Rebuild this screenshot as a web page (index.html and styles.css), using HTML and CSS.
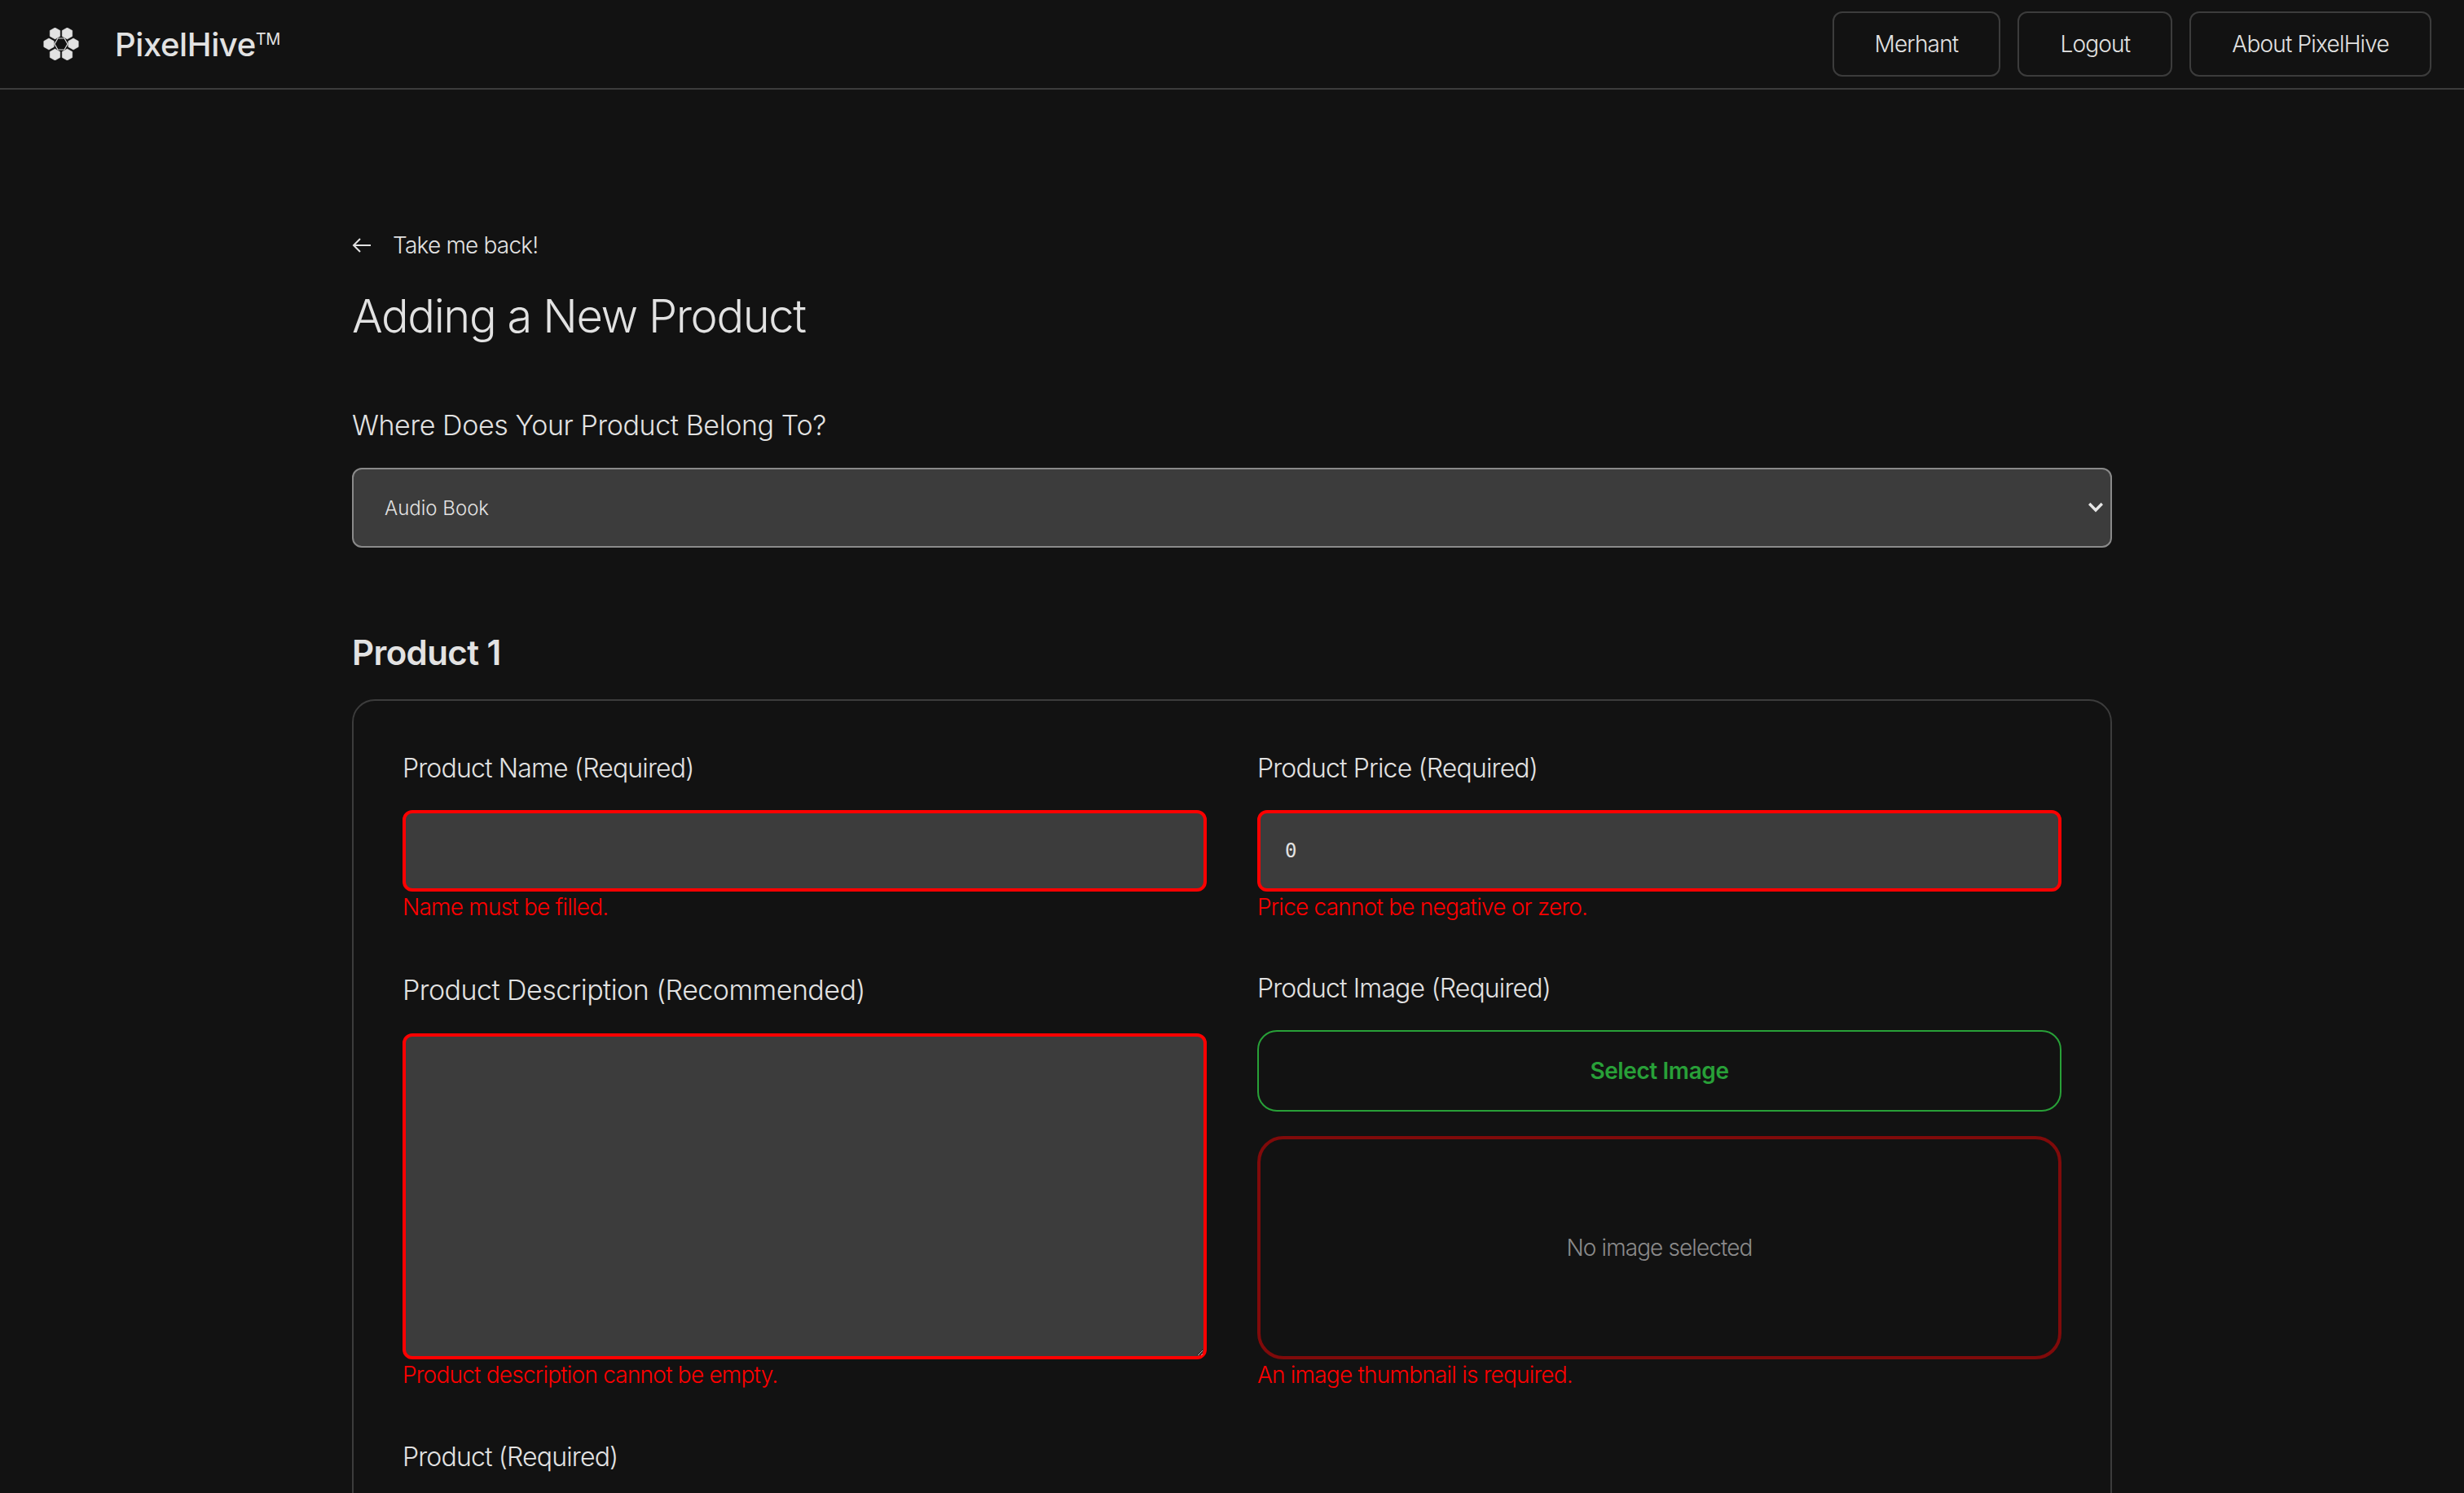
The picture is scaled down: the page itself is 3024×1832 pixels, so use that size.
FILE: index.html
```html
<!DOCTYPE html>
<html lang="en">
<head>
  <meta charset="UTF-8">
  <title>PixelHive - Add Product</title>
  <link rel="stylesheet" href="styles.css">
</head>
<body>

  <header class="topbar">
    <a class="brand" href="#">
      <svg class="brand-logo" viewBox="0 0 44 40" width="44" height="40">
        <defs>
          <polygon id="cell" points="0,-7 6.2,-3.5 6.2,3.5 0,7 -6.2,3.5 -6.2,-3.5"/>
        </defs>
        <g fill="#e2e2e2" stroke="#e2e2e2" stroke-width="0.6" stroke-linejoin="round">
          <use href="#cell" x="14.5" y="7"/>
          <use href="#cell" x="29.5" y="7"/>
          <use href="#cell" x="7" y="20"/>
          <use href="#cell" x="37" y="20"/>
          <use href="#cell" x="14.5" y="33"/>
          <use href="#cell" x="29.5" y="33"/>
        </g>
        <polygon points="14,20 18,13 26,13 30,20 26,27 18,27" fill="none" stroke="#e2e2e2" stroke-width="1.2"/>
      </svg>
      <span class="brand-name">PixelHive<sup class="brand-tm">TM</sup></span>
    </a>
    <nav class="topnav">
      <a class="navbtn" href="#">Merhant</a>
      <a class="navbtn" href="#">Logout</a>
      <a class="navbtn" href="#">About PixelHive</a>
    </nav>
  </header>

  <main class="page">
    <a class="backlink" href="#">
      <svg viewBox="0 0 24 20" width="24" height="20" fill="none" stroke="#e2e2e2" stroke-width="2">
        <path d="M23 10H2M10 2l-8 8 8 8"/>
      </svg>
      Take me back!
    </a>
    <h1 class="title">Adding a New Product</h1>

    <label class="category-label" for="category">Where Does Your Product Belong To?</label>
    <div class="select-wrap">
      <select class="category" id="category">
        <option>Audio Book</option>
      </select>
      <svg class="chevron" viewBox="0 0 18 13" width="18" height="13" fill="none" stroke="#e6e6e6" stroke-width="3.4">
        <path d="M1.2 2l7.8 8 7.8-8"/>
      </svg>
    </div>

    <h2 class="product-title">Product 1</h2>

    <section class="panel">
      <div class="row">
        <div class="field">
          <label class="field-label" for="name">Product Name (Required)</label>
          <input class="input invalid" id="name" type="text">
          <p class="error">Name must be filled.</p>
        </div>
        <div class="field">
          <label class="field-label" for="price">Product Price (Required)</label>
          <input class="input invalid mono" id="price" type="text" value="0">
          <p class="error">Price cannot be negative or zero.</p>
        </div>
      </div>

      <div class="row row-media">
        <div class="field">
          <label class="field-label label-big" for="desc">Product Description (Recommended)</label>
          <textarea class="input invalid textarea" id="desc"></textarea>
          <p class="error">Product description cannot be empty.</p>
        </div>
        <div class="field">
          <label class="field-label">Product Image (Required)</label>
          <button class="select-image" type="button">Select Image</button>
          <div class="thumb">No image selected</div>
          <p class="error">An image thumbnail is required.</p>
        </div>
      </div>

      <label class="field-label label-file">Product (Required)</label>
    </section>
  </main>

</body>
</html>
```

FILE: styles.css
```css
* {
  box-sizing: border-box;
}

html, body {
  height: 1832px;
  overflow: hidden;
}

body {
  margin: 0;
  background: #121212;
  color: #e2e2e2;
  font-family: Inter, "Liberation Sans", sans-serif;
  font-weight: 300;
}

a {
  color: inherit;
  text-decoration: none;
}

.topbar {
  display: flex;
  align-items: center;
  justify-content: space-between;
  height: 110px;
  padding: 0 40px 0 53px;
  border-bottom: 2px solid #3c3c3c;
}

.brand {
  display: flex;
  align-items: center;
  gap: 44px;
}

.brand-name {
  font-size: 40px;
  font-weight: 500;
  letter-spacing: -0.4px;
}

.brand-tm {
  font-size: 20px;
  font-weight: 400;
  line-height: 0;
  vertical-align: 14px;
}

.topnav {
  display: flex;
  gap: 21px;
}

.navbtn {
  display: flex;
  align-items: center;
  height: 80px;
  padding: 0 50px;
  border: 2px solid #3c3c3c;
  border-radius: 12px;
  font-size: 28px;
  letter-spacing: -0.8px;
}

/* the panel carries on below the fold, so the page clips it at the window */
.page {
  width: 2160px;
  height: 1722px;
  margin-left: 432px;
  padding-top: 174px;
  overflow: hidden;
}

.backlink {
  display: flex;
  align-items: center;
  gap: 26px;
  height: 34px;
  font-size: 28px;
  letter-spacing: -0.8px;
}

.title {
  margin: 36px 0 0;
  font-size: 56px;
  line-height: 68px;
  font-weight: 300;
  letter-spacing: -1.4px;
}

.category-label {
  display: block;
  margin-top: 79px;
  font-size: 34px;
  line-height: 42px;
  letter-spacing: -0.4px;
}

.select-wrap {
  position: relative;
  margin-top: 31px;
}

.category {
  display: block;
  width: 100%;
  height: 98px;
  padding: 0 38px;
  appearance: none;
  background: #3c3c3c;
  color: #e2e2e2;
  border: 2px solid #8a8a8a;
  border-radius: 12px;
  font-family: inherit;
  font-size: 24px;
  font-weight: 300;
}

.chevron {
  position: absolute;
  top: 42px;
  right: 11px;
  pointer-events: none;
}

.product-title {
  margin: 103px 0 0;
  font-size: 42px;
  line-height: 52px;
  font-weight: 600;
  letter-spacing: -0.6px;
}

.panel {
  height: 1100px;
  margin-top: 31px;
  padding: 62px 60px 60px;
  border: 2px solid #3c3c3c;
  border-radius: 28px;
}

.row {
  display: grid;
  grid-template-columns: 987px 987px;
  column-gap: 62px;
}

.row-media {
  margin-top: 64px;
}

.field {
  display: flex;
  flex-direction: column;
}

.field-label {
  display: block;
  font-size: 32px;
  line-height: 42px;
  letter-spacing: -0.85px;
}

.label-big {
  font-size: 34px;
  line-height: 46px;
  letter-spacing: -0.53px;
}

.label-file {
  margin-top: 65px;
}

.input {
  display: block;
  width: 100%;
  height: 100px;
  margin-top: 30px;
  padding: 0 30px;
  background: #3c3c3c;
  color: #e2e2e2;
  border-radius: 12px;
  font-size: 24px;
}

.invalid {
  border: 4px solid #ff0000;
}

.mono {
  font-family: "DejaVu Sans Mono", monospace;
}

.textarea {
  height: 400px;
  resize: vertical;
}

.error {
  margin: 4px 0 0;
  color: #ff0000;
  font-size: 28px;
  line-height: 30px;
  letter-spacing: -0.78px;
}

.select-image {
  height: 100px;
  margin-top: 30px;
  background: transparent;
  color: #28a038;
  border: 2px solid #28a038;
  border-radius: 24px;
  font-family: inherit;
  font-size: 28px;
  font-weight: 600;
  letter-spacing: -0.4px;
}

.thumb {
  display: flex;
  align-items: center;
  justify-content: center;
  height: 274px;
  margin-top: 30px;
  border: 4px solid #800a0a;
  border-radius: 32px;
  color: #8a8a8a;
  font-size: 28px;
  letter-spacing: -0.9px;
}
```
